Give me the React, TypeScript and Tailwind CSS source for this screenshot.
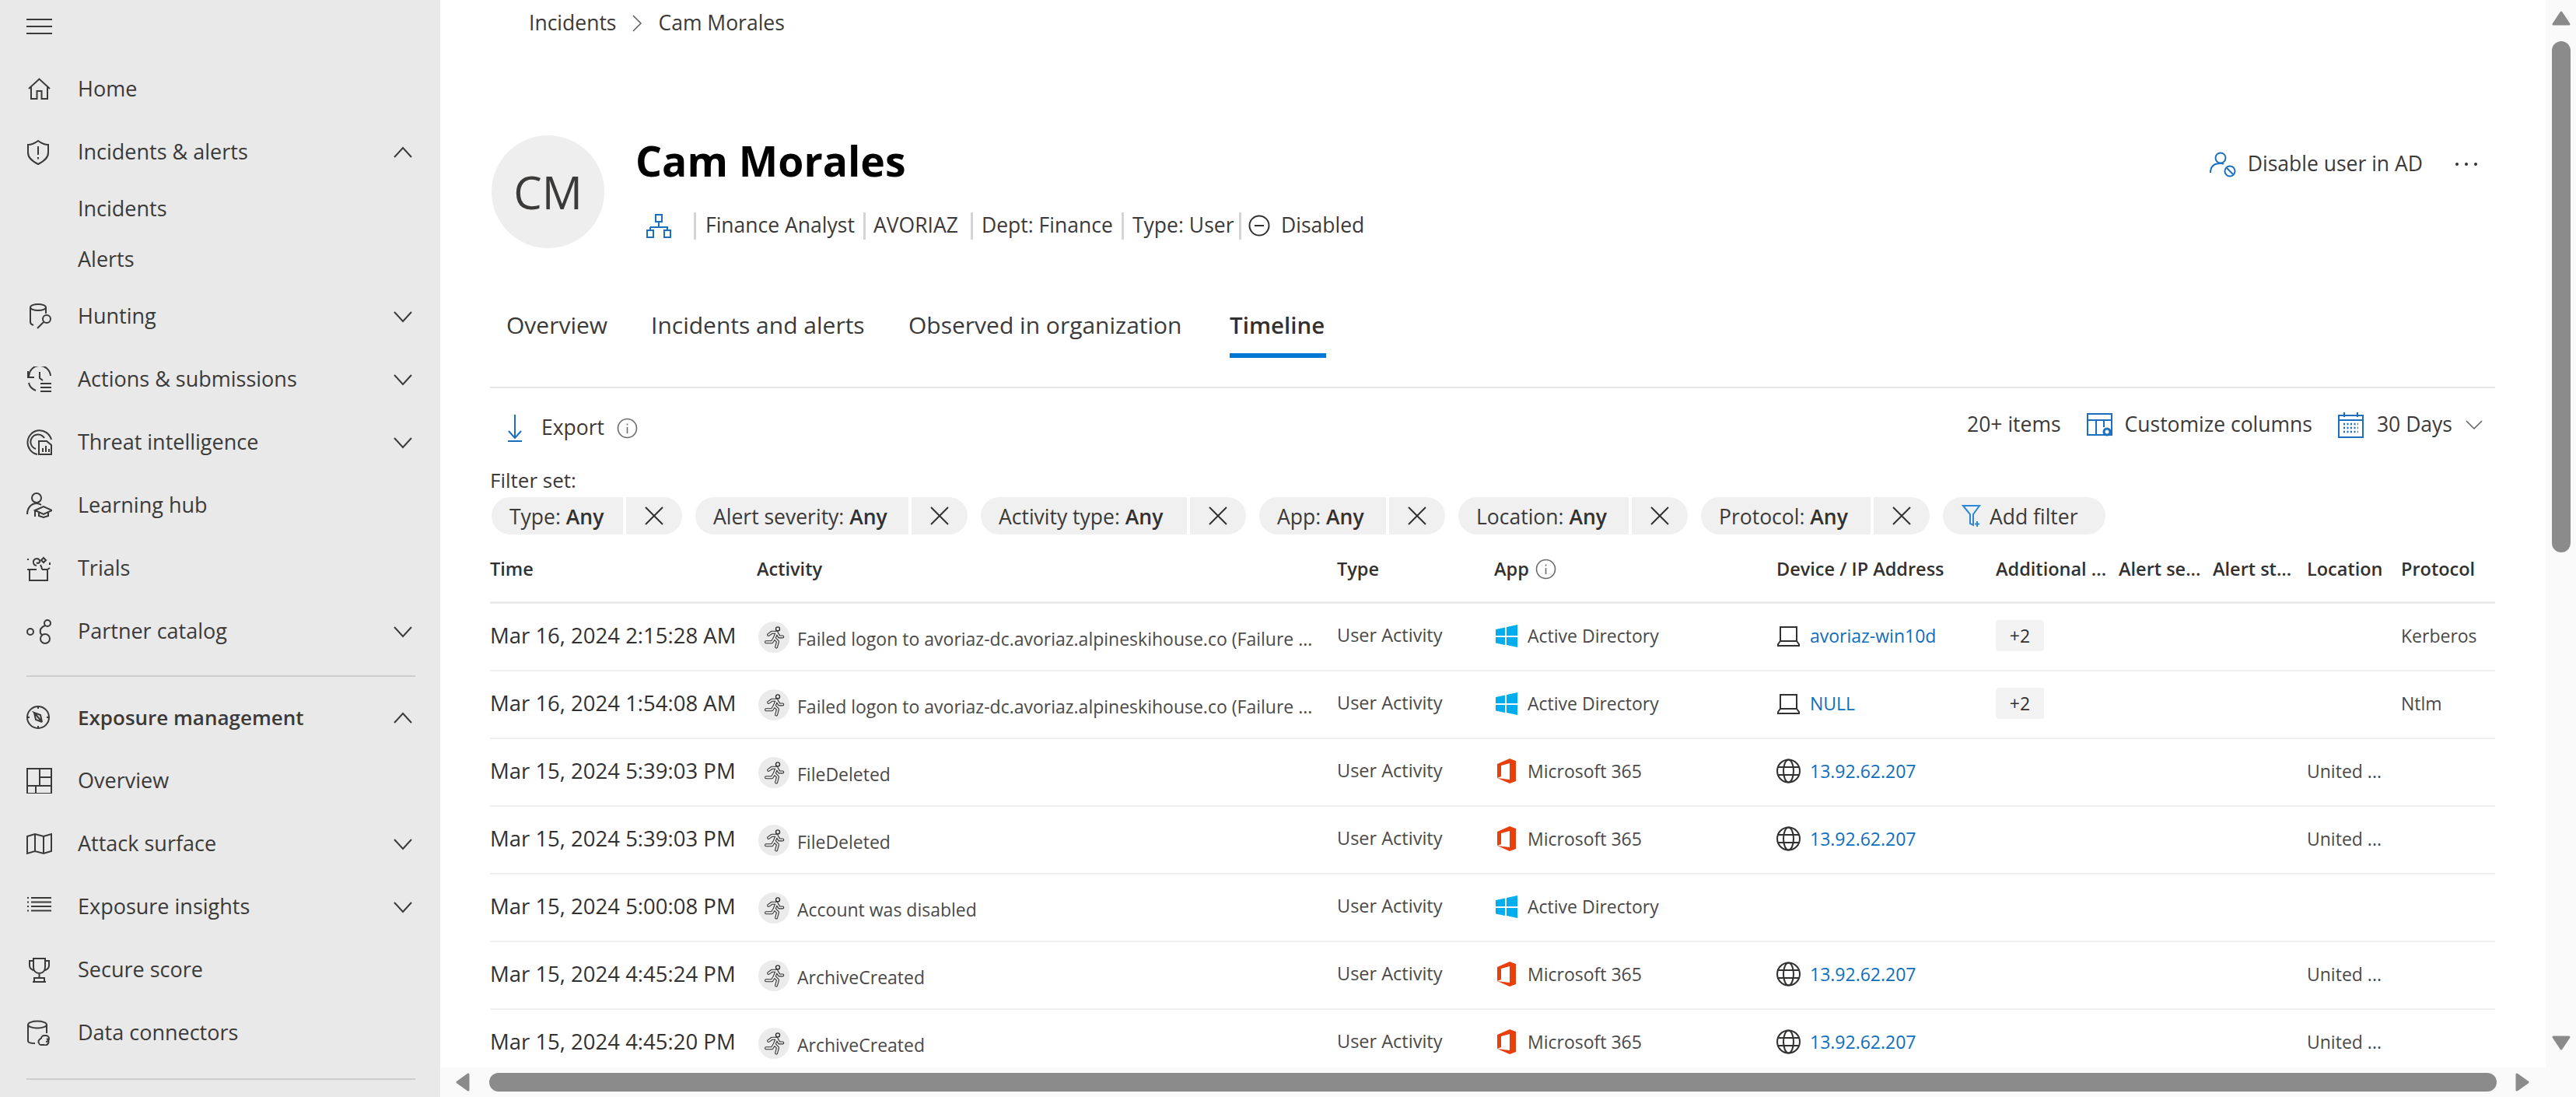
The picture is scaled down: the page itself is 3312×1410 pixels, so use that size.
import React from 'react';

const Svg = ({ w = 33, h = 33, vb, className = '', children }: any) => (
  <svg
    width={w}
    height={h}
    viewBox={vb || `0 0 ${w} ${h}`}
    fill="none"
    stroke="currentColor"
    strokeWidth={2}
    className={`shrink-0 ${className}`}
  >
    {children}
  </svg>
);

const navIcons: any = {
  home: <path d="M3 16 16.5 3.5 30 16M6 14v15h7.5V19h6v10H27V14" />,
  shield: (
    <>
      <path d="M15 2c-4 3-8 5-13 5v10c0 7 5 11 13 15 8-4 13-8 13-15V7c-5 0-9-2-13-5z" />
      <path d="M15 9v11M15 23v2.5" />
    </>
  ),
  hunting: (
    <>
      <ellipse cx="15" cy="5" rx="10" ry="4" />
      <path d="M5 5v19c0 2 1 3 4 4M25 5v8" />
      <circle cx="26" cy="20" r="5" />
      <path d="M22 24 14 32" />
    </>
  ),
  actions: (
    <>
      <path d="M3 14A14 14 0 0 1 31 12M2 6v8h8M17 7v8l4 3M18 22h14M18 27h14M18 32h14M3 21c1 5 4 8 9 10" />
    </>
  ),
  threat: (
    <>
      <path d="M14 32A15.5 15.5 0 1 1 32 13M12 25A9.500 9.500 0 1 1 23 11" />
      <path d="M16 32V15h10l6 5v12zM21 29v-5M25 29v-8M29 29v-4" />
    </>
  ),
  learning: (
    <>
      <circle cx="13" cy="7" r="6" />
      <path d="M1 28c0-8 5-14 12-14 2 0 4 .5 6 2M11 23l11-5 11 5-11 5zM11 23v8M16 26v4l6 2 6-2v-4" />
    </>
  ),
  trials: (
    <>
      <path d="M4 18v14h23V18M4 18H1l0 0M4 18h9M20 18h7l3-2M13 13a4.500 4.500 0 1 1 4-7c1 3-2 5-4 3M20 18c0-3-1-4-2-6" />
      <path d="M22 3l3 3-3 3-3-3z" />
      <path d="M2 4v2M30 9v3" />
    </>
  ),
  partner: (
    <>
      <circle cx="5" cy="17" r="4" />
      <circle cx="27" cy="6" r="4" />
      <circle cx="24" cy="26" r="6" />
      <path d="M24 9c-5 2-7 6-6 10l2 2" />
    </>
  ),
  compass: (
    <>
      <circle cx="15" cy="16" r="14" />
      <path d="M10 10 20 22l-2-9zM10 10l2 9 8 3M15 2v3M15 27v3M1 16h3M26 16h3" />
    </>
  ),
  overview: <path d="M1 1h31v32H1zM17 1v22M17 12h15M1 23h31M12 23v10" />,
  map: <path d="M1 7l10-3 11 3 10-3v22l-10 3-11-3-10 3zM11 4v22M22 7v22" />,
  insights: <path d="M6 5h26M6 10.500h26M6 16h26M6 21.500h26M1 5h2M1 10.500h2M1 16h2M1 21.500h2" />,
  trophy: (
    <>
      <path d="M9 2h15v11c0 5-3 8-7.500 8S9 18 9 13zM9 5H4v6c0 3 2 5 5 6M24 5h5v6c0 3-2 5-5 6M16.500 21v6M10 27h13v5H10zM8 32h17" />
    </>
  ),
  connector: (
    <>
      <ellipse cx="14" cy="6" rx="12" ry="4.500" />
      <path d="M2 6v21c0 2 3 3 9 3M26 6v11M19 24a4 4 0 0 1 4-4h2a4 4 0 0 1 0 8M26 24a4 4 0 0 1-4 8h-2a4 4 0 0 1-1-8" />
    </>
  ),
};

const Chevron = ({ up = false }: any) => (
  <Svg w={24} h={16} className="text-[#3b3a39]">
    <path d={up ? 'M1 14 12 2l11 12' : 'M1 2l11 12L23 2'} />
  </Svg>
);

const NavRow = ({ icon, label, chevron, bold }: any) => (
  <div className="flex items-center h-[81px] pl-[34px] pr-[36px] text-[27px] text-[#3b3a39]">
    <span className="w-[66px] flex text-[#3b3a39]">
      <Svg>{navIcons[icon]}</Svg>
    </span>
    <span className={bold ? 'font-semibold text-[26px]' : ''}>{label}</span>
    {chevron && (
      <span className="ml-auto flex">
        <Chevron up={chevron === 'up'} />
      </span>
    )}
  </div>
);

const SubRow = ({ label }: any) => (
  <div className="flex items-center h-[65px] pl-[100px] text-[27px] text-[#3b3a39]">{label}</div>
);

const Divider = () => <div className="h-[2px] ml-[34px] mr-[32px] bg-[#cdcdcd]" />;

const Sidebar = () => (
  <aside className="w-[566px] shrink-0 h-full bg-[#e9e9e9] overflow-hidden">
    <div className="h-[74px] pl-[34px] pt-[24px]">
      <div className="w-[33px] h-[20px] flex flex-col justify-between">
        <div className="h-[2px] bg-[#3b3a39]" />
        <div className="h-[2px] bg-[#3b3a39]" />
        <div className="h-[2px] bg-[#3b3a39]" />
      </div>
    </div>
    <NavRow icon="home" label="Home" />
    <NavRow icon="shield" label="Incidents & alerts" chevron="up" />
    <SubRow label="Incidents" />
    <SubRow label="Alerts" />
    <NavRow icon="hunting" label="Hunting" chevron="down" />
    <NavRow icon="actions" label="Actions & submissions" chevron="down" />
    <NavRow icon="threat" label="Threat intelligence" chevron="down" />
    <NavRow icon="learning" label="Learning hub" />
    <NavRow icon="trials" label="Trials" />
    <NavRow icon="partner" label="Partner catalog" chevron="down" />
    <div className="h-[30px] pt-[16px]">
      <Divider />
    </div>
    <NavRow icon="compass" label="Exposure management" chevron="up" bold />
    <NavRow icon="overview" label="Overview" />
    <NavRow icon="map" label="Attack surface" chevron="down" />
    <NavRow icon="insights" label="Exposure insights" chevron="down" />
    <NavRow icon="trophy" label="Secure score" />
    <NavRow icon="connector" label="Data connectors" />
    <div className="pt-[18px]">
      <Divider />
    </div>
  </aside>
);

const InfoIcon = () => (
  <Svg w={27} h={27} className="text-[#6b6a69]">
    <circle cx="13.500" cy="13.500" r="12" strokeWidth={1.6} />
    <path d="M13.500 12v8M13.500 7.500v2" strokeWidth={1.6} />
  </Svg>
);

const Chip = ({ label, w }: any) => (
  <div className="flex h-[48px] gap-[4px] text-[26.500px] text-[#3b3a39]">
    <div className={`${w} flex items-center pl-[23px] pt-[4px] bg-[#f0f0f0] rounded-l-[24px] whitespace-pre`}>
      {label}: <span className="font-semibold text-[#323130]">Any</span>
    </div>
    <div className="w-[72px] flex items-center justify-center bg-[#f0f0f0] rounded-r-[24px]">
      <Svg w={24} h={24} className="text-[#323130]">
        <path d="M1 1l22 22M23 1 1 23" />
      </Svg>
    </div>
  </div>
);

const WinLogo = () => (
  <svg width="28" height="29" viewBox="0 0 28 29" className="shrink-0">
    <path fill="#00adef" d="M0 6 12 3.500V14H0zM14 3l14-3v14H14zM0 16h12v10L0 23.500zM14 16h14v13l-14-3z" />
  </svg>
);

const OfficeLogo = () => (
  <svg width="28" height="32" viewBox="0 0 28 32" className="shrink-0">
    <path fill="#e8400c" d="M2 25V7L18 0l8 3v26l-8 3L2 25l16 2V6L7 9v14z" />
  </svg>
);

const Laptop = () => (
  <Svg w={31} h={27} className="text-[#323130]">
    <path d="M5 2h21v18H5zM5 20l-3 4v2h27v-2l-3-4" />
  </Svg>
);

const Globe = () => (
  <Svg w={31} h={32} className="text-[#323130]">
    <circle cx="15.500" cy="16" r="14.500" />
    <ellipse cx="15.500" cy="16" rx="6.500" ry="14.500" />
    <path d="M2 11h27M2 21h27" />
  </Svg>
);

const Runner = () => (
  <div className="w-[40px] h-[40px] rounded-full bg-[#ebebeb] flex items-center justify-center shrink-0">
    <svg width="30" height="30" viewBox="0 0 24 24" fill="none" strokeLinecap="round" strokeLinejoin="round">
      <g stroke="#323130" strokeWidth="3.200">
        <path d="M6.500 9.500 10 7h5l-2.500 6 3.500 3.500L14.500 22M12.500 13 10 17H4M15 7.500l2.500 4H21" />
      </g>
      <g stroke="#ebebeb" strokeWidth="1.500">
        <path d="M6.500 9.500 10 7h5l-2.500 6 3.500 3.500L14.500 22M12.500 13 10 17H4M15 7.500l2.500 4H21" />
      </g>
      <circle cx="16" cy="3.500" r="2" stroke="#323130" strokeWidth="1.100" />
    </svg>
  </div>
);

const rows = [
  { time: 'Mar 16, 2024 2:15:28 AM', activity: 'Failed logon to avoriaz-dc.avoriaz.alpineskihouse.co (Failure ...', app: 'ad', device: 'avoriaz-win10d', deviceIcon: 'laptop', extra: '+2', protocol: 'Kerberos' },
  { time: 'Mar 16, 2024 1:54:08 AM', activity: 'Failed logon to avoriaz-dc.avoriaz.alpineskihouse.co (Failure ...', app: 'ad', device: 'NULL', deviceIcon: 'laptop', extra: '+2', protocol: 'Ntlm' },
  { time: 'Mar 15, 2024 5:39:03 PM', activity: 'FileDeleted', app: 'm365', device: '13.92.62.207', deviceIcon: 'globe', location: 'United ...' },
  { time: 'Mar 15, 2024 5:39:03 PM', activity: 'FileDeleted', app: 'm365', device: '13.92.62.207', deviceIcon: 'globe', location: 'United ...' },
  { time: 'Mar 15, 2024 5:00:08 PM', activity: 'Account was disabled', app: 'ad' },
  { time: 'Mar 15, 2024 4:45:24 PM', activity: 'ArchiveCreated', app: 'm365', device: '13.92.62.207', deviceIcon: 'globe', location: 'United ...' },
  { time: 'Mar 15, 2024 4:45:20 PM', activity: 'ArchiveCreated', app: 'm365', device: '13.92.62.207', deviceIcon: 'globe', location: 'United ...' },
];

const gridCols = 'grid grid-cols-[343px_746px_202px_363px_282px_158px_121px_121px_121px_121px]';

const TableRow = ({ r }: any) => (
  <div className={`${gridCols} h-[87px] items-center border-b-2 border-[#f0f0f0] text-[23px] text-[#4a4948]`}>
    <div className="text-[27.500px] font-medium text-[#323130] pb-[3px] whitespace-nowrap">{r.time}</div>
    <div className="flex items-center gap-[10px] pl-[2px] whitespace-nowrap">
      <Runner />
      <span className="pt-[6px]">{r.activity}</span>
    </div>
    <div className="pb-[3px] text-[23.500px]">User Activity</div>
    <div className="flex items-center gap-[13px] pl-[2px] pb-[3px]">
      {r.app === 'ad' ? <WinLogo /> : <OfficeLogo />}
      <span>{r.app === 'ad' ? 'Active Directory' : 'Microsoft 365'}</span>
    </div>
    <div className="flex items-center gap-[12px] pb-[3px]">
      {r.deviceIcon === 'laptop' && <Laptop />}
      {r.deviceIcon === 'globe' && <Globe />}
      {r.device && <span className="text-[#106ebe]">{r.device}</span>}
    </div>
    <div className="pb-[3px]">
      {r.extra && (
        <span className="flex items-center justify-center w-[62px] h-[40px] rounded-[4px] bg-[#f3f3f3] text-[#323130]">{r.extra}</span>
      )}
    </div>
    <div />
    <div />
    <div className="pb-[3px] whitespace-nowrap">{r.location}</div>
    <div className="pb-[3px]">{r.protocol}</div>
  </div>
);

const Triangle = ({ dir }: any) => {
  const d: any = {
    up: 'M12 2 22 17H2z',
    down: 'M2 2h20L12 17z',
    left: 'M17 2v20L3 12z',
    right: 'M3 2v20l14-10z',
  };
  const vertical = dir === 'up' || dir === 'down';
  return (
    <svg
      width={vertical ? 24 : 20}
      height={vertical ? 19 : 24}
      viewBox={vertical ? '0 0 24 19' : '0 0 20 24'}
      fill="#8b8b8b"
      stroke="#8b8b8b"
      strokeWidth="3"
      strokeLinejoin="round"
      className="shrink-0"
    >
      <path d={d[dir]} />
    </svg>
  );
};

const App = () => (
  <div className="flex w-[3312px] h-[1410px] overflow-hidden bg-white font-['Open_Sans','Noto_Sans',sans-serif]">
    <Sidebar />
    <main className="flex-1 min-w-0 h-full flex flex-col">
      <div className="flex-1 min-h-0 overflow-hidden pl-[64px] pr-[65px]">
        <div className="h-[60px] flex items-center pl-[50px] text-[26.500px] text-[#3b3a39]">
          <span>Incidents</span>
          <Svg w={14} h={24} className="mx-[20px] text-[#605e5c]">
            <path d="M2 2l10 10L2 22" strokeWidth={1.500} />
          </Svg>
          <span>Cam Morales</span>
        </div>

        <div className="flex mt-[114px] h-[145px] pl-[2px]">
          <div className="w-[145px] h-[145px] rounded-full bg-[#eeeeee] flex items-center justify-center text-[58px] text-[#3b3a39]">CM</div>
          <div className="ml-[40px] flex flex-col">
            <h1 className="h-[66px] leading-[66px] text-[53.500px] font-bold text-black whitespace-nowrap">Cam Morales</h1>
            <div className="flex items-center h-[36px] mt-[32px] text-[26.500px] text-[#3b3a39] whitespace-nowrap">
              <Svg w={32} h={31} className="ml-[14px] mr-[29px] text-[#1a6fbf]">
                <path d="M12 1h8v9h-8zM16 10v7M5 17h22v4M5 17v4M1 21h8v9H1zM23 21h8v9h-8z" />
              </Svg>
              <div className="w-[3px] h-[35px] bg-[#d4d4d4]" />
              <span className="w-[215px] pl-[12px]">Finance Analyst</span>
              <div className="w-[3px] h-[35px] bg-[#d4d4d4]" />
              <span className="w-[135px] pl-[10px]">AVORIAZ</span>
              <div className="w-[3px] h-[35px] bg-[#d4d4d4]" />
              <span className="w-[191px] pl-[11px]">Dept: Finance</span>
              <div className="w-[3px] h-[35px] bg-[#d4d4d4]" />
              <span className="w-[148px] pl-[11px]">Type: User</span>
              <div className="w-[3px] h-[35px] bg-[#d4d4d4]" />
              <Svg w={28} h={28} className="ml-[9px] mr-[14px] text-[#323130]">
                <circle cx="14" cy="14" r="12.500" />
                <path d="M8 14h12" />
              </Svg>
              <span>Disabled</span>
            </div>
          </div>
          <div className="ml-auto flex items-center h-[74px] text-[26.500px] text-[#3b3a39] pr-[23px]">
            <Svg w={34} h={33} className="mr-[15px] text-[#1a6fbf]">
              <circle cx="14" cy="8" r="6.500" />
              <path d="M1 27c0-8 5-12 13-12 2 0 3 0 4 1" />
              <circle cx="26" cy="25" r="6.500" />
              <path d="M22 21l8 8" />
            </Svg>
            <span>Disable user in AD</span>
            <div className="ml-[42px] flex gap-[8px]">
              <div className="w-[4px] h-[4px] rounded-full bg-[#323130]" />
              <div className="w-[4px] h-[4px] rounded-full bg-[#323130]" />
              <div className="w-[4px] h-[4px] rounded-full bg-[#323130]" />
            </div>
          </div>
        </div>

        <div className="flex mt-[80px] pl-[21px] text-[30px] text-[#3b3a39] whitespace-nowrap">
          <div className="w-[186px] h-[61px] leading-[38px]">Overview</div>
          <div className="w-[331px] h-[61px] leading-[38px]">Incidents and alerts</div>
          <div className="w-[413px] h-[61px] leading-[38px]">Observed in organization</div>
          <div className="h-[61px] leading-[38px] w-[124px] text-[29.500px] font-semibold text-[#323130] border-b-[6px] border-[#0078d4]">Timeline</div>
        </div>
        <div className="mt-[37px] h-[2px] bg-[#e6e6e6]" />

        <div className="flex items-center h-[40px] mt-[31px] text-[26.500px] text-[#3b3a39] whitespace-nowrap">
          <Svg w={20} h={35} className="ml-[22px] mr-[24px] text-[#1a6fbf]">
            <path d="M10 0v30M2 21l8 9 8-9M1 34h18" />
          </Svg>
          <span>Export</span>
          <span className="ml-[16px] flex">
            <InfoIcon />
          </span>
          <div className="ml-auto flex items-center pr-[16px] pb-[8px]">
            <span>20+ items</span>
            <Svg w={33} h={31} className="ml-[33px] mr-[16px] text-[#1a6fbf]">
              <path d="M1 1h31v27H1zM1 9h31M12 9v19M22 9v9M1 28h17" />
              <circle cx="26" cy="24" r="4" strokeWidth={3} />
            </Svg>
            <span>Customize columns</span>
            <Svg w={33} h={34} className="ml-[33px] mr-[17px] text-[#1a6fbf]">
              <path d="M1 5h31v28H1zM1 11h31M8 1v6M25 1v6" />
              <path d="M7 16h19M7 21h19M7 26h19" strokeWidth={2.500} strokeDasharray="2 2.500" />
            </Svg>
            <span>30 Days</span>
            <Svg w={22} h={14} className="ml-[17px] text-[#605e5c]">
              <path d="M1 2l10 10L21 2" strokeWidth={1.500} />
            </Svg>
          </div>
        </div>

        <div className="h-[36px] leading-[36px] mt-[29px] text-[26px] text-[#3b3a39]">Filter set:</div>
        <div className="flex items-center gap-[17px] mt-[4px] pl-[2px] whitespace-nowrap">
          <Chip label="Type" w="w-[169px]" />
          <Chip label="Alert severity" w="w-[274px]" />
          <Chip label="Activity type" w="w-[265px]" />
          <Chip label="App" w="w-[163px]" />
          <Chip label="Location" w="w-[219px]" />
          <Chip label="Protocol" w="w-[218px]" />
          <div className="flex items-center w-[209px] h-[48px] pl-[24px] gap-[10px] bg-[#f0f0f0] rounded-[24px] text-[26.500px] text-[#3b3a39]">
            <Svg w={26} h={30} className="text-[#2b88d8]">
              <path d="M2 2h21l-8 11v14l-4-2V13zM20 22v7M17 25.500h6" />
            </Svg>
            <span className="pt-[4px]">Add filter</span>
          </div>
        </div>

        <div className={`${gridCols} h-[89px] pt-[3px] items-center border-b-[3px] border-[#ececec] text-[23.500px] font-semibold text-[#323130] whitespace-nowrap`}>
          <div>Time</div>
          <div>Activity</div>
          <div>Type</div>
          <div className="flex items-center gap-[8px]">
            App
            <InfoIcon />
          </div>
          <div>Device / IP Address</div>
          <div>Additional ...</div>
          <div>Alert se...</div>
          <div>Alert st...</div>
          <div>Location</div>
          <div>Protocol</div>
        </div>
        {rows.map((r, i) => (
          <TableRow key={i} r={r} />
        ))}
      </div>

      <div className="h-[38px] shrink-0 bg-[#fafafa] flex items-center pl-[19px]">
        <Triangle dir="left" />
        <div className="ml-[24px] w-[2581px] h-[24px] rounded-full bg-[#8b8b8b]" />
        <div className="ml-[23px]">
          <Triangle dir="right" />
        </div>
      </div>
    </main>

    <aside className="w-[39px] shrink-0 h-full bg-[#fafafa] flex flex-col pl-[8px] pt-[14px] pb-[60px]">
      <Triangle dir="up" />
      <div className="mt-[20px] w-[24px] h-[657px] rounded-full bg-[#8b8b8b]" />
      <div className="mt-auto">
        <Triangle dir="down" />
      </div>
    </aside>
  </div>
);

export default App;
